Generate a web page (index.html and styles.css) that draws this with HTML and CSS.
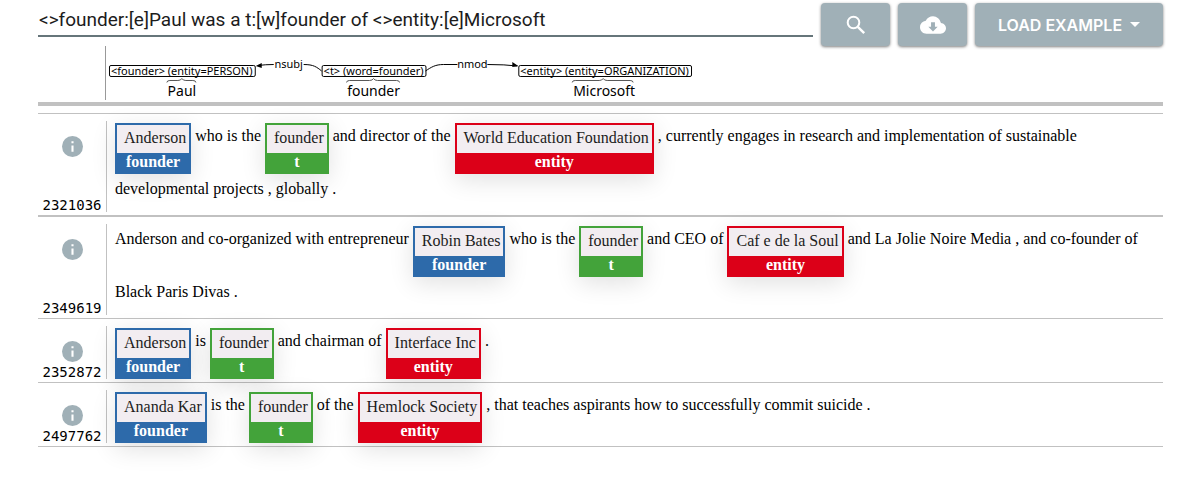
FILE: index.html
```html
<!DOCTYPE html>
<html lang="en">
<head>
<meta charset="utf-8">
<title>Syntactic search</title>
<link rel="stylesheet" href="styles.css">
</head>
<body>
<main class="page">
  <form class="toolbar">
    <input class="query" type="text" aria-label="Query" value="&lt;&gt;founder:[e]Paul was a t:[w]founder of &lt;&gt;entity:[e]Microsoft">
    <button class="btn" type="button" aria-label="Search">
      <svg width="20" height="20" viewBox="0 0 20 20" fill="none" stroke="currentColor" stroke-width="2"><circle cx="7.500" cy="7.500" r="5.800"/><path d="M11.800 11.800l6.400 6.400" stroke-width="2.400"/></svg>
    </button>
    <button class="btn" type="button" aria-label="Download">
      <svg width="26" height="26" viewBox="0 0 24 24" fill="currentColor"><path d="M19.350 10.040A7.490 7.490 0 0 0 12 4C9.110 4 6.600 5.640 5.350 8.040A5.994 5.994 0 0 0 0 14c0 3.310 2.690 6 6 6h13c2.760 0 5-2.240 5-5 0-2.640-2.050-4.780-4.650-4.960zM16.300 13.500L12 18l-4.300-4.500h2.500V9.500h3.600v4z"/></svg>
    </button>
    <button class="btn btn-menu" type="button">LOAD EXAMPLE
      <svg width="10" height="5" viewBox="0 0 10 5" fill="currentColor"><path d="M0 0h10L5 5z"/></svg>
    </button>
  </form>

  <section class="graph">
    <svg class="graph-view" width="600" height="54" viewBox="0 0 600 54">
      <g class="node">
        <rect x="3.500" y="19.500" width="146" height="11" rx="1.500"/>
        <rect x="216.500" y="19.500" width="104" height="11" rx="1.500"/>
        <rect x="413.500" y="19.500" width="173" height="11" rx="1.500"/>
      </g>
      <g class="edge">
        <path d="M152 19.500Q160 18.500 168 18.500M198 18.500C208 18.500 211 21 216 25"/>
        <path d="M320 25C326 21 330 18.500 338 18.500H352M382 18.500Q400 18.500 412 20"/>
        <path class="brace" d="M61 36.500q0-2 3-2h8q3 0 4-2q1 2 4 2h7q3 0 3 2M241 36.500q0-2 3-2h20q3 0 4-2q1 2 4 2h19q3 0 3 2M467 36.500q0-2 3-2h24q3 0 4-2q1 2 4 2h23q3 0 3 2"/>
      </g>
      <path d="M150 20l6-3v5zM413 20l-6-4v5z"/>
      <g class="token-spec">
        <text x="5" y="29">&lt;founder&gt; (entity=PERSON)</text>
        <text x="218" y="29">&lt;t&gt; (word=founder)</text>
        <text x="415" y="29">&lt;entity&gt; (entity=ORGANIZATION)</text>
      </g>
      <g class="edge-name">
        <text x="183" y="22">nsubj</text>
        <text x="367" y="22">nmod</text>
      </g>
      <g class="word">
        <text x="76" y="50">Paul</text>
        <text x="268" y="50">founder</text>
        <text x="499" y="50">Microsoft</text>
      </g>
    </svg>
  </section>

  <section class="results">
    <article class="row">
      <div class="meta"><button class="info" type="button" aria-label="Details of 2321036"><svg width="21" height="21" viewBox="0 0 20 20"><circle cx="10" cy="10" r="10"/><path d="M9 5h2v2H9zM9 9h2v6H9z"/></svg></button><span>2321036</span></div>
      <p class="sentence"><span class="tag blue"><span>Anderson</span><b>founder</b></span> who is the <span class="tag green"><span>founder</span><b>t</b></span> and director of the <span class="tag red"><span>World Education Foundation</span><b>entity</b></span> , currently engages in research and implementation of sustainable developmental projects , globally .</p>
    </article>
    <article class="row">
      <div class="meta"><button class="info" type="button" aria-label="Details of 2349619"><svg width="21" height="21" viewBox="0 0 20 20"><circle cx="10" cy="10" r="10"/><path d="M9 5h2v2H9zM9 9h2v6H9z"/></svg></button><span>2349619</span></div>
      <p class="sentence">Anderson and co-organized with entrepreneur <span class="tag blue"><span>Robin Bates</span><b>founder</b></span> who is the <span class="tag green"><span>founder</span><b>t</b></span> and CEO of <span class="tag red"><span>Caf e de la Soul</span><b>entity</b></span> and La Jolie Noire Media , and co-founder of Black Paris Divas .</p>
    </article>
    <article class="row">
      <div class="meta"><button class="info" type="button" aria-label="Details of 2352872"><svg width="21" height="21" viewBox="0 0 20 20"><circle cx="10" cy="10" r="10"/><path d="M9 5h2v2H9zM9 9h2v6H9z"/></svg></button><span>2352872</span></div>
      <p class="sentence"><span class="tag blue"><span>Anderson</span><b>founder</b></span> is <span class="tag green"><span>founder</span><b>t</b></span> and chairman of <span class="tag red"><span>Interface Inc</span><b>entity</b></span> .</p>
    </article>
    <article class="row">
      <div class="meta"><button class="info" type="button" aria-label="Details of 2497762"><svg width="21" height="21" viewBox="0 0 20 20"><circle cx="10" cy="10" r="10"/><path d="M9 5h2v2H9zM9 9h2v6H9z"/></svg></button><span>2497762</span></div>
      <p class="sentence"><span class="tag blue"><span>Ananda Kar</span><b>founder</b></span> is the <span class="tag green"><span>founder</span><b>t</b></span> of the <span class="tag red"><span>Hemlock Society</span><b>entity</b></span> , that teaches aspirants how to successfully commit suicide .</p>
    </article>
  </section>
</main>
</body>
</html>
```

FILE: styles.css
```css
* { box-sizing: border-box; }
body {
  margin: 0;
  background: #fff;
  color: #000;
  font: 16px "Liberation Serif", serif;
}
.page { padding: 3px 33px 24px 38px; }
.toolbar { display: flex; gap: 8px; align-items: flex-start; }
.query {
  flex: 1;
  min-width: 0;
  height: 34px;
  margin: 0;
  padding: 0 1px;
  border: 0;
  border-bottom: 2px solid #66757a;
  background: none;
  color: #1c1c1c;
  font: 19px Roboto, sans-serif;
  outline: 0;
}
.btn {
  display: flex;
  align-items: center;
  justify-content: center;
  width: 69px;
  height: 43px;
  padding: 0;
  border: 0;
  border-radius: 4px;
  background: #a0b0b7;
  color: #fff;
  box-shadow: 0 1px 3px rgba(0, 0, 0, .5);
}
.btn-menu {
  width: 188px;
  gap: 8px;
  font: 600 16px Inter, sans-serif;
}
.graph {
  padding: 0 0 2px 67px;
  border-bottom: 4px solid #c1c1c1;
}
.graph-view {
  display: block;
  border-left: 1px solid #999;
  font-family: "Noto Sans", sans-serif;
}
.node rect, .edge path { fill: none; stroke: #000; }
.edge .brace { stroke: #555; }
.token-spec, .edge-name { font-size: 11px; }
.edge-name, .word { text-anchor: middle; }
.word { font-size: 14px; }
.results { margin-top: 7px; border-bottom: 1px solid #c1c1c1; }
.row {
  display: flex;
  padding: 7px 0 3px;
  border-top: 1px solid #c1c1c1;
}
.row:first-child { border-bottom: 1px solid #c1c1c1; }
.meta {
  display: flex;
  flex: none;
  flex-direction: column;
  align-items: center;
  justify-content: space-between;
  width: 69px;
  padding-top: 15px;
  border-right: 1px solid #c1c1c1;
  font: 14px/14px "DejaVu Sans Mono", monospace;
}
.info { display: flex; padding: 0; border: 0; background: none; }
.info circle { fill: #a0b0b7; }
.info path { fill: #fff; }
.sentence {
  flex: 1;
  margin: -4px 0 4px;
  padding: 0 8px;
  line-height: 38px;
}
.tag {
  display: inline-flex;
  flex-direction: column;
  margin-bottom: -4px;
  vertical-align: -2px;
  border: 2px solid;
  box-shadow: 0 6px 24px rgba(0, 0, 0, .12);
}
.tag span {
  padding: 0 3px 2px 7px;
  background: #f2edf1;
  color: #1c1c1c;
  line-height: 26px;
}
.tag b {
  padding-bottom: 2px;
  color: #fff;
  line-height: 17px;
  text-align: center;
}
.blue { border-color: #2d6aaa; background: #2d6aaa; }
.green { border-color: #43a33a; background: #43a33a; }
.red { border-color: #dc0018; background: #dc0018; }
```
